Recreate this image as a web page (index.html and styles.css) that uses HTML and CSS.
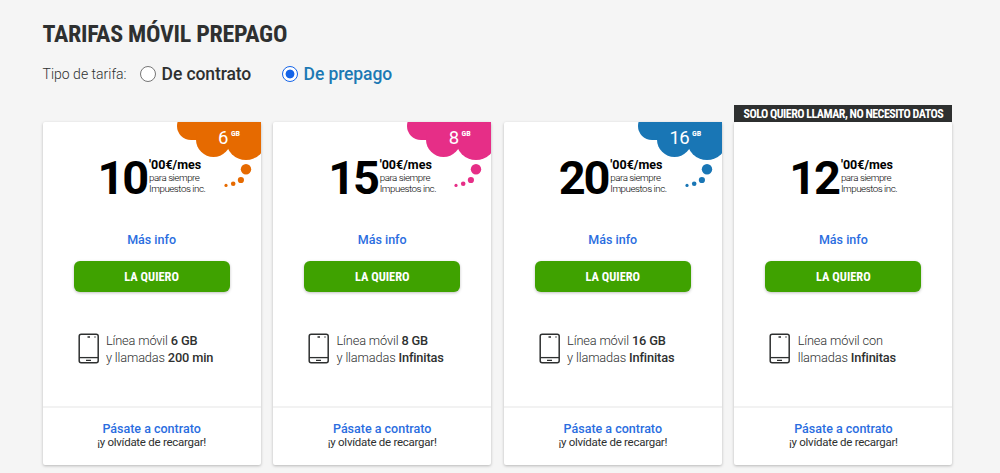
FILE: index.html
```html
<!DOCTYPE html>
<html lang="es">
<head>
    <meta charset="UTF-8">
    <meta name="viewport" content="width=device-width, initial-scale=1.0">
    <title>Tarifas móvil prepago</title>
    <link rel="stylesheet" href="styles.css">
</head>
<body>
    <div class="main">
        <h1>TARIFAS MÓVIL PREPAGO</h1>
        <div class="tipo">
            <span class="tipo-label">Tipo de tarifa:</span>
            <label class="opcion"><input type="radio" name="tipo"><span>De contrato</span></label>
            <label class="opcion activa"><input type="radio" name="tipo" checked><span>De prepago</span></label>
        </div>
        <div class="list"></div>
    </div>
    <script src="script.js"></script>
</body>
</html>
```

FILE: styles.css
```css
*{
    box-sizing: border-box;
}
body{
    margin: 0;
    background-color: #f5f5f5;
    font-family: Roboto, sans-serif;
    color: #2e3030;
}
.main{
    height: 473px;
    padding: 19px 0 0 42.6px;
    overflow: hidden;
}
h1{
    margin: 0;
    font-family: "Roboto Condensed", Roboto, sans-serif;
    font-stretch: 75%;
    font-size: 24px;
    line-height: 30px;
    font-weight: 700;
    letter-spacing: -.28px;
}
.tipo{
    display: flex;
    align-items: center;
    height: 26px;
    margin-top: 12px;
}
.tipo-label{
    width: 97px;
    font-size: 14px;
    line-height: 16px;
    padding-bottom: 1px;
    font-weight: 300;
    white-space: nowrap;
}
.opcion{
    display: flex;
    align-items: center;
    gap: 6px;
    width: 142px;
    font-size: 17.5px;
    font-weight: 500;
    letter-spacing: -.1px;
    white-space: nowrap;
}
.opcion input{
    appearance: none;
    width: 16px;
    height: 16px;
    margin: 0;
    border: 1.5px solid #767676;
    border-radius: 50%;
    background-color: #fff;
    flex: none;
}
.activa{
    color: #1c79b4;
}
.activa input{
    border: 1.5px solid #1464e8;
    background: radial-gradient(circle, #1464e8 4px, #fff 4.8px);
}
.list{
    display: flex;
    align-items: flex-end;
    gap: 12.6px;
    height: 360px;
    margin-top: 18px;
}
.item{
    width: 218px;
    flex: none;
}
.cinta{
    height: 17px;
    background-color: #2e3030;
    color: #fff;
    font-family: "Roboto Condensed", Roboto, sans-serif;
    font-stretch: 75%;
    font-size: 12px;
    line-height: 18px;
    font-weight: 700;
    letter-spacing: -.52px;
    text-align: center;
    white-space: nowrap;
}
.card{
    position: relative;
    height: 343px;
    background-color: #fff;
    border-radius: 2px;
    box-shadow: 0 1px 3px rgba(0, 0, 0, .25);
    display: flex;
    flex-direction: column;
    align-items: center;
}
.nube{
    position: absolute;
    top: 0;
    right: 0;
    width: 84px;
    height: 66px;
    color: #fff;
}
.nube svg{
    position: absolute;
    top: 0;
    left: 0;
}
.gigas{
    position: relative;
    display: flex;
    justify-content: flex-end;
    gap: 3px;
    padding: 6px 20.5px 0 0;
    font-size: 18.5px;
    line-height: 20px;
    letter-spacing: -.6px;
}
.gigas b{
    font-family: "Roboto Condensed", Roboto, sans-serif;
    font-stretch: 75%;
    font-size: 8px;
    line-height: 12px;
    letter-spacing: 0;
}
.naranja{
    fill: #e66a00;
}
.rosa{
    fill: #e62e87;
}
.azul{
    fill: #1976b5;
}
.precio{
    display: flex;
    width: 100%;
    height: 50px;
    margin-top: 31px;
    color: #000;
}
.euros{
    width: 105px;
    font-size: 47px;
    line-height: 49px;
    font-weight: 700;
    letter-spacing: -2.2px;
    text-align: right;
    padding-right: .5px;
}
.detalle{
    padding: 4px 0 0 1.5px;
    font-size: 9.8px;
    line-height: 11px;
    font-weight: 300;
    letter-spacing: -.48px;
    white-space: nowrap;
}
.detalle b{
    display: block;
    font-size: 12.5px;
    line-height: 15px;
    font-weight: 700;
    letter-spacing: 0;
}
.info{
    margin-top: 29px;
    color: #2a6de0;
    font-size: 12.5px;
    line-height: 16px;
    font-weight: 500;
    text-decoration: none;
}
.item button{
    width: 156px;
    height: 31px;
    margin-top: 13px;
    padding: 0;
    border: none;
    border-radius: 6px;
    background-color: #3fa200;
    box-shadow: 0 1px 3px rgba(0, 0, 0, .25);
    color: #fff;
    font-family: "Roboto Condensed", Roboto, sans-serif;
    font-stretch: 75%;
    font-size: 12.4px;
    font-weight: 700;
}
.linea{
    display: flex;
    gap: 6.3px;
    width: 100%;
    margin-top: 39.5px;
    padding-left: 35px;
}
.linea svg{
    margin-top: 1.5px;
}
.linea p{
    margin: 0;
    font-size: 12.8px;
    line-height: 17.5px;
    font-weight: 300;
    letter-spacing: -.15px;
    white-space: nowrap;
}
.linea b{
    font-weight: 500;
}
.pie{
    width: 100%;
    height: 59px;
    margin-top: auto;
    padding-top: 13px;
    border-top: 2px solid #f2f2f2;
    text-align: center;
    font-size: 11.5px;
    line-height: 13px;
    letter-spacing: -.27px;
}
.pie a{
    display: block;
    color: #2a6de0;
    font-size: 12.5px;
    line-height: 15px;
    font-weight: 500;
    letter-spacing: 0;
    text-decoration: none;
}
```

FILE: script.js
```javascript
let list = document.querySelector('.list');
let tarifas=[
    {
        euros: 10,
        gigas: 6,
        color: 'naranja',
        linea: 'Línea móvil <b>6 GB</b><br>y llamadas <b>200 min</b>'
    },
    {
        euros: 15,
        gigas: 8,
        color: 'rosa',
        linea: 'Línea móvil <b>8 GB</b><br>y llamadas <b>Infinitas</b>'
    },
    {
        euros: 20,
        gigas: 16,
        color: 'azul',
        linea: 'Línea móvil <b>16 GB</b><br>y llamadas <b>Infinitas</b>'
    },
    {
        euros: 12,
        cinta: 'SOLO QUIERO LLAMAR, NO NECESITO DATOS',
        linea: 'Línea móvil con<br>llamadas <b>Infinitas</b>'
    },
];
function nube(value){
    return `<div class="nube">
            <svg class="${value.color}" width="84" height="66" viewBox="0 0 84 66">
                <path d="M14 0H84V18H14z"/>
                <circle cx="14" cy="4" r="14"/>
                <circle cx="36.5" cy="17.5" r="17.5"/>
                <circle cx="69" cy="18" r="20"/>
                <circle cx="69" cy="47.3" r="5.2"/>
                <circle cx="63.9" cy="58" r="3.1"/>
                <circle cx="56.2" cy="61.8" r="2.3"/>
                <circle cx="49" cy="63.4" r="1.6"/>
            </svg>
            <div class="gigas">${value.gigas}<b>GB</b></div>
        </div>`;
}
function start(){
    for(const value of tarifas)
        {
            let newDiv = document.createElement('div');
            newDiv.classList.add('item');
            newDiv.innerHTML=`${value.cinta ? `<div class="cinta">${value.cinta}</div>` : ''}
                <div class="card">
                    ${value.gigas ? nube(value) : ''}
                    <div class="precio">
                        <div class="euros">${value.euros}</div>
                        <div class="detalle"><b>'00€/mes</b>para siempre<br>Impuestos inc.</div>
                    </div>
                    <a class="info" href="#">Más info</a>
                    <button>LA QUIERO</button>
                    <div class="linea">
                        <svg width="22" height="31" viewBox="0 0 22 31" fill="none" stroke="#2e3030">
                            <rect x="1.2" y="1.2" width="19" height="28.6" rx="2" stroke-width="1.5"/>
                            <path d="M1 24.6H20" stroke-width="1.3"/>
                            <path d="M8 27.4H13M9.5 4H12M16.5 4H17.5" stroke-width="1.4"/>
                        </svg>
                        <p>${value.linea}</p>
                    </div>
                    <div class="pie"><a href="#">Pásate a contrato</a>¡y olvídate de recargar!</div>
                </div>`;
            list.append(newDiv);
        }
}
start();
```
